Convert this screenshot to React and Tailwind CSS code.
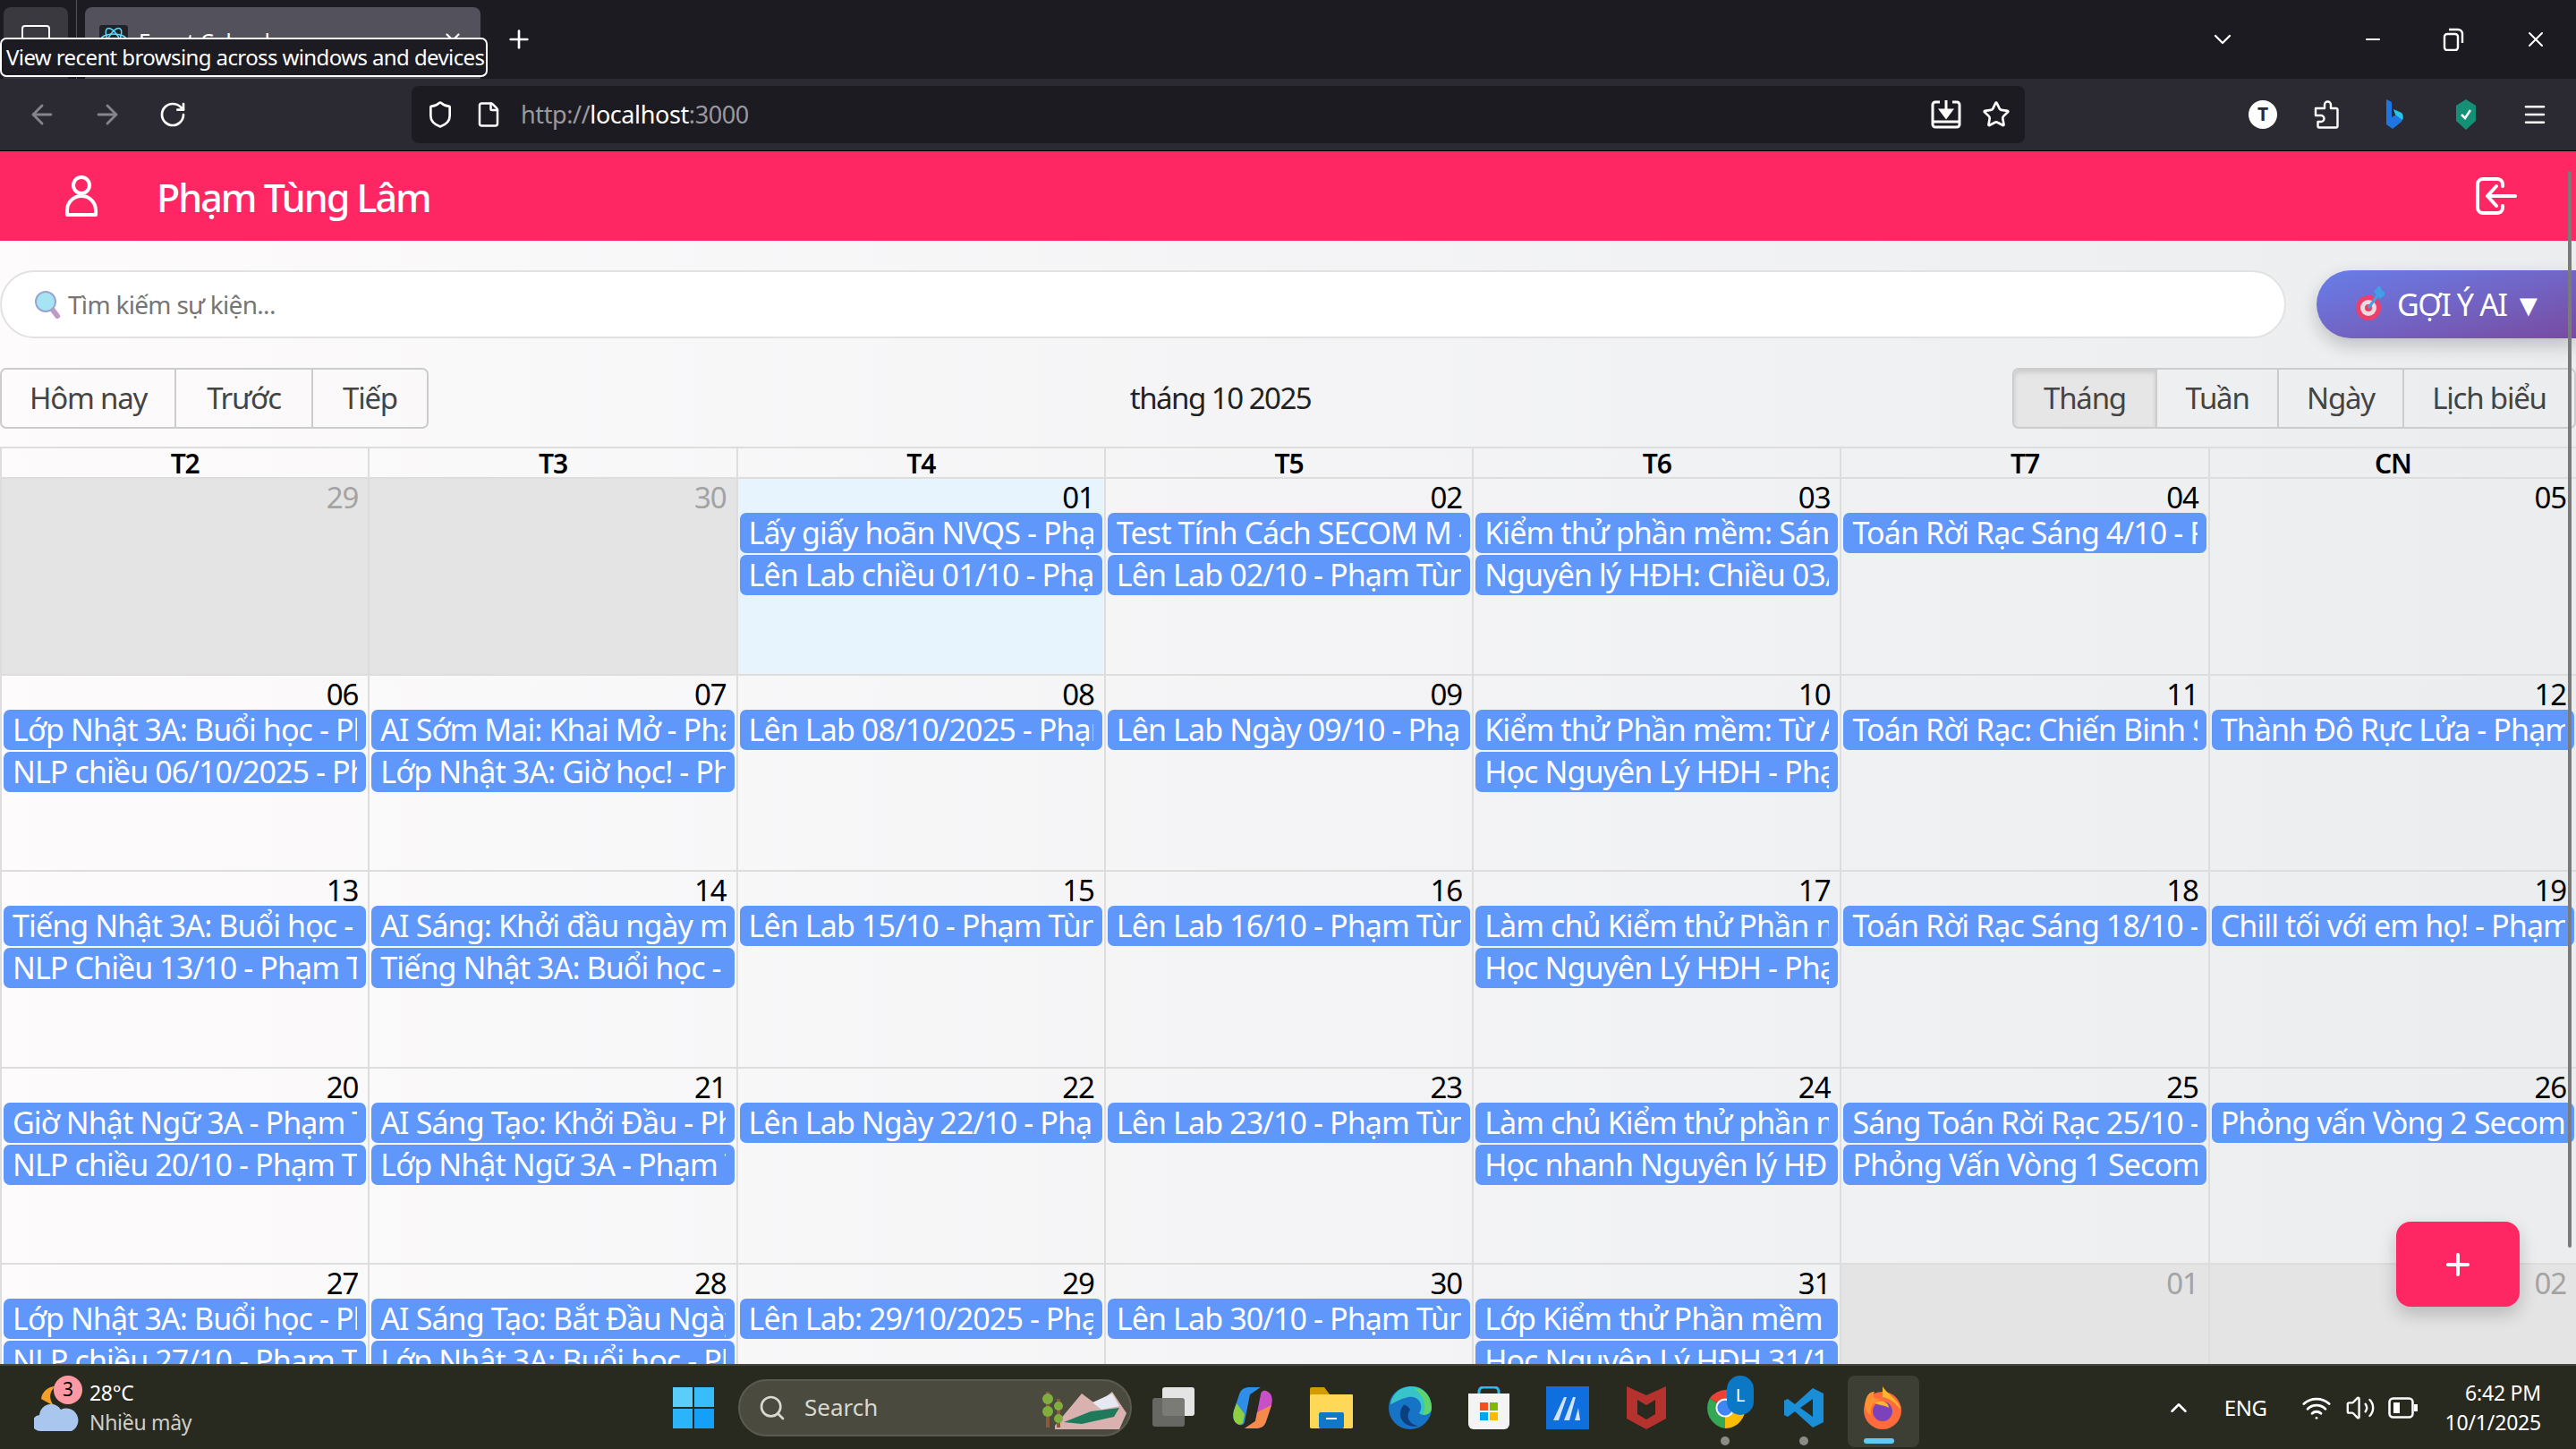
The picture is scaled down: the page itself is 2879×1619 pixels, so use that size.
import { ArrowLeft, ArrowRight, RotateCw, Shield, File, Star, Menu, Minus, X, Plus, ChevronDown, ChevronUp, Search, Wifi, Volume2 } from 'lucide-react';

const weeks = [
    [
        { d: '29', other: true, ev: [] },
        { d: '30', other: true, ev: [] },
        { d: '01', today: true, ev: ['Lấy giấy hoãn NVQS - Phạm Tùng Lâm', 'Lên Lab chiều 01/10 - Phạm Tùng Lâm'] },
        { d: '02', ev: ['Test Tính Cách SECOM M - Phạm Tùng Lâm', 'Lên Lab 02/10 - Phạm Tùng Lâm'] },
        { d: '03', ev: ['Kiểm thử phần mềm: Sáng 03/10', 'Nguyên lý HĐH: Chiều 03/10 - Phạm'] },
        { d: '04', ev: ['Toán Rời Rạc Sáng 4/10 - Phạm Tùng'] },
        { d: '05', ev: [] },
    ],
    [
        { d: '06', ev: ['Lớp Nhật 3A: Buổi học - Phạm Tùng', 'NLP chiều 06/10/2025 - Phạm Tùng'] },
        { d: '07', ev: ['AI Sớm Mai: Khai Mở - Phạm Tùng', 'Lớp Nhật 3A: Giờ học! - Phạm Tùng'] },
        { d: '08', ev: ['Lên Lab 08/10/2025 - Phạm Tùng'] },
        { d: '09', ev: ['Lên Lab Ngày 09/10 - Phạm Tùng'] },
        { d: '10', ev: ['Kiểm thử Phần mềm: Từ A đến Z', 'Học Nguyên Lý HĐH - Phạm Tùng'] },
        { d: '11', ev: ['Toán Rời Rạc: Chiến Binh Sáng'] },
        { d: '12', ev: ['Thành Đô Rực Lửa - Phạm Tùng Lâm'] },
    ],
    [
        { d: '13', ev: ['Tiếng Nhật 3A: Buổi học - Phạm', 'NLP Chiều 13/10 - Phạm Tùng Lâm'] },
        { d: '14', ev: ['AI Sáng: Khởi đầu ngày mới - Phạm', 'Tiếng Nhật 3A: Buổi học - Phạm'] },
        { d: '15', ev: ['Lên Lab 15/10 - Phạm Tùng Lâm'] },
        { d: '16', ev: ['Lên Lab 16/10 - Phạm Tùng Lâm'] },
        { d: '17', ev: ['Làm chủ Kiểm thử Phần mềm - Phạm', 'Học Nguyên Lý HĐH - Phạm Tùng'] },
        { d: '18', ev: ['Toán Rời Rạc Sáng 18/10 - Phạm'] },
        { d: '19', ev: ['Chill tối với em họ! - Phạm Tùng'] },
    ],
    [
        { d: '20', ev: ['Giờ Nhật Ngữ 3A - Phạm Tùng Lâm', 'NLP chiều 20/10 - Phạm Tùng Lâm'] },
        { d: '21', ev: ['AI Sáng Tạo: Khởi Đầu - Phạm Tùng', 'Lớp Nhật Ngữ 3A - Phạm Tùng Lâm'] },
        { d: '22', ev: ['Lên Lab Ngày 22/10 - Phạm Tùng'] },
        { d: '23', ev: ['Lên Lab 23/10 - Phạm Tùng Lâm'] },
        { d: '24', ev: ['Làm chủ Kiểm thử phần mềm - Phạm', 'Học nhanh Nguyên lý HĐH - Phạm'] },
        { d: '25', ev: ['Sáng Toán Rời Rạc 25/10 - Phạm', 'Phỏng Vấn Vòng 1 Secom'] },
        { d: '26', ev: ['Phỏng vấn Vòng 2 Secom - Phạm'] },
    ],
    [
        { d: '27', ev: ['Lớp Nhật 3A: Buổi học - Phạm Tùng', 'NLP chiều 27/10 - Phạm Tùng Lâm'] },
        { d: '28', ev: ['AI Sáng Tạo: Bắt Đầu Ngày Mới', 'Lớp Nhật 3A: Buổi học - Phạm Tùng'] },
        { d: '29', ev: ['Lên Lab: 29/10/2025 - Phạm Tùng'] },
        { d: '30', ev: ['Lên Lab 30/10 - Phạm Tùng Lâm'] },
        { d: '31', ev: ['Lớp Kiểm thử Phần mềm - Phạm', 'Học Nguyên Lý HĐH 31/10 - Phạm'] },
        { d: '01', other: true, ev: [] },
        { d: '02', other: true, ev: [] },
    ],
];

function DayCell({ day }) {
    const bg = day.other ? 'bg-[#e4e4e4]' : day.today ? 'bg-[#e8f4fd]' : '';
    return (
        <div className={`h-[219.5px] border-l-2 border-b-2 border-[#dddddd] pl-[2px] pr-[2px] overflow-hidden ${bg}`}>
            <div className={`h-[36px] pr-[9px] pt-[2px] text-right text-[33px] leading-[38px] ${day.other ? 'text-[#a3a3a3]' : 'text-black'}`}>
                {day.d}
            </div>
            <div className="flex flex-col gap-[2px] mt-[2px]">
                {day.ev.map((t) => (
                    <div key={t} className="h-[45px] rounded-[7px] bg-[#5f97fa] px-[10px] text-white text-[34px] leading-[45px] tracking-[-0.9px]">
                        <div className="overflow-hidden whitespace-nowrap">{t}</div>
                    </div>
                ))}
            </div>
        </div>
    );
}

function TabGroup({ items, active }) {
    return (
        <div className="flex h-[68px] rounded-[7px] border-2 border-[#cccccc] text-[33px] tracking-[-1.2px] text-[#444444]">
            {items.map((item, i) => (
                <div
                    key={item.name}
                    className={`flex items-center justify-center ${item.w} ${i > 0 ? 'border-l-2 border-[#cccccc]' : ''} ${item.name === active ? 'bg-[#e6e6e6] shadow-[inset_0_3px_5px_rgba(0,0,0,0.125)] rounded-l-[6px]' : ''}`}
                >
                    {item.name}
                </div>
            ))}
        </div>
    );
}

function TaskSlot({ children }) {
    return <div className="w-[88px] h-[52px] flex items-center justify-center relative">{children}</div>;
}

function CalendarPage() {
    return (
        <div className="flex-1 overflow-hidden relative bg-gradient-to-r from-[#fdfbfc] to-[#ebedef] font-['Noto_Sans',sans-serif] tracking-[-1.1px]">
            <header className="h-[100px] bg-[#fe2763] flex items-center justify-between pl-[73px] pr-[66px] text-white">
                <div className="flex items-center">
                    <svg width="36" height="48" viewBox="0 0 36 48" fill="none" stroke="white" strokeWidth="4">
                        <circle cx="18" cy="12" r="9" />
                        <path d="M2 45 v-5 a16 16 0 0 1 32 0 v5 z" strokeLinejoin="round" />
                    </svg>
                    <span className="ml-[66px] text-[43px] font-medium leading-none tracking-[-2px] pt-[2px]">Phạm Tùng Lâm</span>
                </div>
                <svg width="46" height="42" viewBox="0 0 46 42" fill="none" stroke="white" strokeWidth="4" strokeLinecap="round" strokeLinejoin="round">
                    <path d="M30 10 V8 a6 6 0 0 0 -6 -6 H8 a6 6 0 0 0 -6 6 V34 a6 6 0 0 0 6 6 H24 a6 6 0 0 0 6 -6 V32" />
                    <path d="M44 21 H14 M23 10 L13 21 L23 32" />
                </svg>
            </header>

            <div className="flex items-center gap-[34px] h-[76px] mt-[33px]">
                <div className="flex-1 h-full rounded-full bg-white border-2 border-[#e2e2e2] flex items-center pl-[36px]">
                    <svg width="30" height="32" viewBox="0 0 30 32">
                        <path d="M20 21 L26 29" stroke="#c09cc4" strokeWidth="6" strokeLinecap="round" />
                        <circle cx="13" cy="13" r="11" fill="#a6e4f4" stroke="#9aa5cf" strokeWidth="2" />
                    </svg>
                    <span className="ml-[8px] text-[28px] text-[#757575] tracking-[-0.7px]">Tìm kiếm sự kiện...</span>
                </div>
                <div className="w-[290px] h-full rounded-l-full rounded-r-[38px] bg-gradient-to-br from-[#667eea] to-[#764ba2] shadow-[0_8px_20px_rgba(0,0,0,0.2)] flex items-center pl-[44px] text-white text-[34px] tracking-[-1.4px] whitespace-nowrap">
                    <svg width="32" height="40" viewBox="0 0 32 40" className="mr-[14px]">
                        <circle cx="14" cy="24" r="14" fill="#ee3f6b" />
                        <circle cx="14" cy="24" r="9" fill="#e9dde0" />
                        <circle cx="14" cy="24" r="4" fill="#ee3f6b" />
                        <path d="M14 24 L26 8 M22 6 L26 1 L28 6 L32 8 L27 12 Z" stroke="#3fa0e6" strokeWidth="3" fill="#3fa0e6" />
                    </svg>
                    GỢI Ý AI ▼
                </div>
            </div>

            <div className="flex items-center justify-between mt-[33px]">
                <TabGroup items={[{ name: 'Hôm nay', w: 'w-[193px]' }, { name: 'Trước', w: 'w-[153px]' }, { name: 'Tiếp', w: 'w-[129px]' }]} />
                <div className="text-[33px] tracking-[-1.5px] text-[#222222]">tháng 10 2025</div>
                <TabGroup
                    active="Tháng"
                    items={[{ name: 'Tháng', w: 'w-[158px]' }, { name: 'Tuần', w: 'w-[136px]' }, { name: 'Ngày', w: 'w-[140px]' }, { name: 'Lịch biểu', w: 'w-[192px]' }]}
                />
            </div>

            <div className="mt-[20px] border-t-2 border-[#dddddd] grid grid-cols-7">
                {['T2', 'T3', 'T4', 'T5', 'T6', 'T7', 'CN'].map((d) => (
                    <div key={d} className="h-[34px] border-l-2 border-b-2 border-[#dddddd] text-center text-[30px] leading-[34px] font-semibold text-black">
                        {d}
                    </div>
                ))}
                {weeks.flat().map((day, i) => (
                    <DayCell key={i} day={day} />
                ))}
            </div>

            <div className="absolute left-[2870px] top-[22px] w-[4px] h-[1203px] rounded-full bg-[#7a7a7a]" />
            <div className="absolute left-[2678px] top-[1196px] w-[138px] h-[95px] rounded-[16px] bg-[#fe2763] shadow-[0_8px_20px_rgba(0,0,0,0.2)] flex items-center justify-center text-white">
                <Plus size={38} strokeWidth={2.5} />
            </div>
        </div>
    );
}

function Taskbar() {
    return (
        <div className="h-[95px] shrink-0 border-t-2 border-[#47473f] bg-[#292a1f] flex items-center text-white font-['Noto_Sans',sans-serif] relative">
            <div className="w-[752px] pl-[38px] flex items-center shrink-0">
                <div className="relative w-[50px] h-[60px]">
                    <svg width="50" height="60" viewBox="0 0 50 60">
                        <path d="M8 20 A16 16 0 0 1 24 6 A14 14 0 0 0 26 30 Z" fill="#f2a02a" />
                        <path d="M8 56 a9 9 0 0 1 -2 -18 a13 13 0 0 1 24 -6 a11 11 0 0 1 12 24 Z" fill="#a9c6ef" />
                    </svg>
                    <div className="absolute left-[22px] -top-[6px] w-[32px] h-[32px] rounded-full bg-[#ff9aa5] text-black text-[21px] flex items-center justify-center">3</div>
                </div>
                <div className="ml-[12px] text-[23px] leading-[33px] tracking-[-0.3px]">
                    <div>28°C</div>
                    <div className="text-[#cfcfc8]">Nhiều mây</div>
                </div>
            </div>
            <svg width="46" height="46" viewBox="0 0 46 46" className="shrink-0">
                <rect x="0" y="0" width="22" height="22" fill="#5bcdfb" />
                <rect x="24" y="0" width="22" height="22" fill="#38bdfa" />
                <rect x="0" y="24" width="22" height="22" fill="#2cb4fb" />
                <rect x="24" y="24" width="22" height="22" fill="#14a0f8" />
            </svg>
            <div className="ml-[27px] w-[440px] h-[64px] rounded-full bg-[#4a4b3e] border-2 border-[#5a5b4e] flex items-center pl-[20px] text-[#d8d8d0] text-[26px] shrink-0 relative overflow-hidden">
                <Search size={32} />
                <span className="ml-[20px]">Search</span>
                <svg width="100" height="48" viewBox="0 0 100 48" className="absolute right-[4px] top-[6px]">
                    <path d="M20 44 L50 8 L66 20 L84 6 L100 30 L92 48 H20 Z" fill="#d9b2b0" />
                    <path d="M30 40 L60 28 L92 24 L86 34 L50 42 Z" fill="#1f7a5c" />
                    <path d="M62 18 L84 8 L92 22 L72 26 Z" fill="#e6e9f2" />
                    <rect x="10" y="6" width="4" height="40" fill="#8a5a3a" />
                    <rect x="22" y="14" width="4" height="32" fill="#8a5a3a" />
                    <circle cx="12" cy="14" r="6" fill="#7fae3f" />
                    <circle cx="12" cy="28" r="6" fill="#7fae3f" />
                    <circle cx="24" cy="22" r="5" fill="#7fae3f" />
                    <circle cx="24" cy="36" r="5" fill="#7fae3f" />
                </svg>
            </div>
            <div className="ml-[3px] flex shrink-0">
                <TaskSlot>
                    <div className="relative w-[48px] h-[46px]">
                        <div className="absolute left-[11px] top-0 w-[36px] h-[32px] rounded-[3px] bg-[#e4e4e4]" />
                        <div className="absolute left-0 top-[12px] w-[36px] h-[32px] rounded-[3px] bg-[#6e6e6a]/90" />
                    </div>
                </TaskSlot>
                <TaskSlot>
                    <svg width="46" height="46" viewBox="0 0 46 46">
                        <path d="M8 42 C2 40 0 34 2 26 L8 8 C10 2 14 0 20 0 H32 L20 8 L14 38 C14 41 11 43 8 42 Z" fill="#2f8fe8" />
                        <path d="M8 42 C2 40 0 34 2 26 L5 18 L14 30 L12 40 Z" fill="#8fcf3f" />
                        <path d="M38 4 C44 6 46 12 44 20 L38 38 C36 44 32 46 26 46 H14 L26 38 L32 8 C32 5 35 3 38 4 Z" fill="#c94fc6" />
                        <path d="M44 20 L38 38 C36 44 32 46 26 46 H14 L26 38 L28 28 Z" fill="#f58a4a" />
                    </svg>
                </TaskSlot>
                <TaskSlot>
                    <svg width="48" height="46" viewBox="0 0 48 46">
                        <path d="M0 2 a2 2 0 0 1 2 -2 H16 L22 8 H48 V44 a2 2 0 0 1 -2 2 H2 a2 2 0 0 1 -2 -2 Z" fill="#d49a00" />
                        <rect x="0" y="8" width="48" height="38" rx="2" fill="#ffd858" />
                        <rect x="10" y="28" width="28" height="18" rx="2" fill="#0f78c9" />
                        <rect x="18" y="34" width="12" height="2" fill="#ffffff" />
                    </svg>
                </TaskSlot>
                <TaskSlot>
                    <svg width="48" height="48" viewBox="0 0 48 48">
                        <circle cx="24" cy="24" r="24" fill="#1673c5" />
                        <path d="M2 20 C4 6 16 0 26 0 C40 0 48 12 48 24 C48 32 38 34 34 30 C40 22 34 10 22 12 C12 14 4 20 2 20 Z" fill="#38c5c9" />
                        <path d="M28 2 C40 2 48 12 48 24 C48 30 42 32 38 32 C44 22 38 8 28 2 Z" fill="#5fd468" />
                        <path d="M16 22 C8 32 16 48 34 44 C24 44 18 34 24 26 C20 20 17 20 16 22 Z" fill="#0c3f7e" />
                    </svg>
                </TaskSlot>
                <TaskSlot>
                    <svg width="46" height="48" viewBox="0 0 46 48">
                        <path d="M12 10 V5 a5 5 0 0 1 5 -4 H29 a5 5 0 0 1 5 4 V10" fill="none" stroke="#2fb7ea" strokeWidth="3" />
                        <path d="M0 8 H46 V42 a6 6 0 0 1 -6 6 H6 a6 6 0 0 1 -6 -6 Z" fill="#f4f4f4" />
                        <rect x="13" y="18" width="9" height="9" fill="#f25022" />
                        <rect x="24" y="18" width="9" height="9" fill="#7fba00" />
                        <rect x="13" y="29" width="9" height="9" fill="#00a4ef" />
                        <rect x="24" y="29" width="9" height="9" fill="#ffb900" />
                    </svg>
                </TaskSlot>
                <TaskSlot>
                    <svg width="48" height="48" viewBox="0 0 48 48">
                        <rect width="48" height="48" fill="#0f6fde" />
                        <path d="M8 38 L20 12 H23 L14 38 Z M20 38 L30 12 H33 L26 38 Z M32 38 L36 24 L38 38 Z" fill="#cfe4fb" />
                    </svg>
                </TaskSlot>
                <TaskSlot>
                    <svg width="44" height="48" viewBox="0 0 44 48">
                        <path d="M0 0 L22 10 L44 0 V36 L22 48 L0 36 Z" fill="#b5322e" />
                        <path d="M12 15 L22 21 L32 15 V31 L22 37 L12 31 Z" fill="#292a1f" />
                    </svg>
                </TaskSlot>
                <TaskSlot>
                    <svg width="46" height="48" viewBox="0 0 48 48">
                        <path d="M24 24 L6 13 A24 24 0 0 1 45 13 Z" fill="#ea4335" />
                        <path d="M24 24 L45 13 A24 24 0 0 1 24 48 Z" fill="#fbbc05" />
                        <path d="M24 24 L24 48 A24 24 0 0 1 6 13 Z" fill="#34a853" />
                        <circle cx="24" cy="24" r="11" fill="#ffffff" />
                        <circle cx="24" cy="24" r="9" fill="#4285f4" />
                    </svg>
                    <div className="absolute left-[46px] -top-[10px] w-[30px] h-[44px] rounded-full bg-[#0a78c4] text-white text-[20px] flex items-center justify-center">L</div>
                    <div className="absolute left-[39px] top-[58px] w-[10px] h-[10px] rounded-full bg-[#8c8c86]" />
                </TaskSlot>
                <TaskSlot>
                    <svg width="48" height="48" viewBox="0 0 24 24">
                        <path d="M17 1 L23 4 V20 L17 23 L7 14 L3 17 L1 16 V8 L3 7 L7 10 Z M17 7 L10 12 L17 17 Z" fill="#1a8fd8" fillRule="evenodd" />
                    </svg>
                    <div className="absolute left-[39px] top-[58px] w-[10px] h-[10px] rounded-full bg-[#8c8c86]" />
                </TaskSlot>
                <TaskSlot>
                    <div className="absolute left-[5px] -top-[10px] w-[80px] h-[80px] rounded-[8px] bg-[#3e3f34]" />
                    <svg width="46" height="48" viewBox="0 0 46 48" className="relative">
                        <circle cx="23" cy="27" r="21" fill="#ff6b3a" />
                        <path d="M23 0 C28 8 38 14 42 22 C46 32 38 14 23 12 Z" fill="#ffb52e" />
                        <path d="M4 16 C6 8 10 6 14 6 C10 14 16 14 22 14 C14 16 8 22 10 32 C4 30 2 22 4 16 Z" fill="#ff9230" />
                        <circle cx="23" cy="28" r="11" fill="#7b42bc" />
                        <path d="M14 18 C22 14 30 18 30 24 C24 20 18 22 14 18 Z" fill="#ffb52e" />
                    </svg>
                    <div className="absolute left-[23px] top-[60px] w-[34px] h-[6px] rounded-full bg-[#62c8f5]" />
                </TaskSlot>
            </div>

            <div className="ml-auto pr-[39px] flex items-center shrink-0">
                <ChevronUp size={30} strokeWidth={2} />
                <span className="ml-[36px] text-[24px] tracking-[-0.4px]">ENG</span>
                <Wifi size={34} strokeWidth={2} className="ml-[38px]" />
                <Volume2 size={34} strokeWidth={1.7} className="ml-[15px]" />
                <svg width="34" height="24" viewBox="0 0 34 24" fill="none" className="ml-[14px]">
                    <rect x="1.5" y="1.5" width="26" height="21" rx="4" stroke="white" strokeWidth="2.5" />
                    <rect x="6" y="6" width="7" height="12" fill="white" />
                    <rect x="29" y="8" width="4" height="8" fill="white" />
                </svg>
                <div className="ml-[30px] text-[23px] leading-[33px] text-right tracking-[-0.2px]">
                    <div>6:42 PM</div>
                    <div>10/1/2025</div>
                </div>
            </div>
        </div>
    );
}

function BrowserChrome() {
    return (
        <div className="shrink-0 font-['Noto_Sans',sans-serif] text-white relative">
            <div className="h-[88px] bg-[#1c1b22] flex items-center relative">
                <div className="ml-[4px] w-[72px] h-[80px] mt-[8px] rounded-t-[8px] bg-[#3a3940] flex justify-center pt-[20px]">
                    <div className="w-[32px] h-[20px] rounded-[4px] border-2 border-white" />
                </div>
                <div className="ml-[9px] w-[1px] h-[88px] bg-[#55545c]" />
                <div className="ml-[9px] mt-[8px] w-[442px] h-[80px] rounded-t-[8px] bg-[#53525c] flex pl-[16px] pt-[20px] text-[24px] overflow-hidden">
                    <svg width="32" height="32" viewBox="0 0 32 32" fill="none" stroke="#61dafb" strokeWidth="1.5" className="bg-[#20232a] rounded-[3px]">
                        <ellipse cx="16" cy="16" rx="14" ry="6" />
                        <ellipse cx="16" cy="16" rx="14" ry="6" transform="rotate(60 16 16)" />
                        <ellipse cx="16" cy="16" rx="14" ry="6" transform="rotate(120 16 16)" />
                    </svg>
                    <span className="ml-[12px]">Event Calendar</span>
                    <X size={26} className="ml-auto mr-[18px] mt-[4px]" />
                </div>
                <Plus size={32} strokeWidth={2} className="ml-[27px]" />
                <div className="ml-auto flex items-center">
                    <ChevronDown size={32} strokeWidth={1.7} className="mr-[-11px]" />
                    <Minus size={24} className="ml-[151px]" strokeWidth={2} />
                    <svg width="24" height="26" viewBox="0 0 24 26" fill="none" stroke="white" strokeWidth="2.4" className="ml-[66px]">
                        <rect x="2" y="7" width="15" height="18" rx="3" />
                        <path d="M7 2 H17 a5 5 0 0 1 5 5 V17" />
                    </svg>
                    <X size={28} strokeWidth={1.7} className="ml-[66px] mr-[31px]" />
                </div>
            </div>
            <div className="h-[81px] bg-[#2b2a33] border-b-[1px] border-black flex items-center">
                <ArrowLeft size={34} strokeWidth={2} className="ml-[30px] text-[#85848a]" />
                <ArrowRight size={34} strokeWidth={2} className="ml-[39px] text-[#85848a]" />
                <RotateCw size={32} strokeWidth={2} className="ml-[40px]" />
                <div className="ml-[251px] w-[1803px] h-[64px] rounded-[8px] bg-[#1c1b22] flex items-center pl-[16px] pr-[16px]">
                    <Shield size={32} strokeWidth={2} />
                    <File size={30} strokeWidth={2} className="ml-[23px]" />
                    <span className="ml-[21px] text-[27px] text-[#9a999f] tracking-[-0.4px]">
                        http://<span className="text-white">localhost</span>:3000
                    </span>
                    <svg width="34" height="32" viewBox="0 0 34 32" fill="none" stroke="white" strokeWidth="3" className="ml-auto">
                        <path d="M10 2 H5 a3 3 0 0 0 -3 3 V27 a3 3 0 0 0 3 3 H29 a3 3 0 0 0 3 -3 V5 a3 3 0 0 0 -3 -3 H24" />
                        <path d="M2 24 H32" />
                        <path d="M17 0 V12" />
                        <path d="M11 11 H23 L17 19 Z" fill="white" />
                    </svg>
                    <Star size={32} strokeWidth={2} className="ml-[23px]" />
                </div>
                <div className="ml-[250px] w-[32px] h-[32px] rounded-full bg-white text-[#2b2a33] text-[21px] font-bold flex items-center justify-center">T</div>
                <svg width="28" height="32" viewBox="0 0 28 32" fill="none" stroke="white" strokeWidth="2.4" strokeLinejoin="round" className="ml-[41px]">
                    <path d="M12 9 V5 a3.5 3.5 0 0 1 7 0 V9 H25 a1.5 1.5 0 0 1 1.5 1.5 V29 a1.5 1.5 0 0 1 -1.5 1.5 H6 a1.5 1.5 0 0 1 -1.5 -1.5 V24 H8 a3.5 3.5 0 0 0 0 -7 H2 V9 Z" />
                </svg>
                <svg width="20" height="34" viewBox="0 0 20 34" className="ml-[52px]">
                    <path d="M1 0 L7 3 V20 L14 16 L10 13 L18 16 C20 18 20 22 18 25 L8 33 L1 28 Z" fill="#1f76e0" />
                    <path d="M9 11 L18 15 C20 17 20 21 19 23 L11 17 Z" fill="#28c6e8" />
                </svg>
                <svg width="24" height="34" viewBox="0 0 24 34" className="ml-[58px]">
                    <path d="M12 0 L23 7 V24 L12 34 L1 24 V7 Z" fill="#149077" />
                    <path d="M7 17 L11 21 L17 12" fill="none" stroke="white" strokeWidth="2.5" />
                </svg>
                <Menu size={30} strokeWidth={2} className="ml-[50px]" />
            </div>
            <div className="absolute left-0 top-[42px] w-[545px] h-[44px] rounded-[7px] border-2 border-white bg-[#1c1b22] flex items-center pl-[5px] text-[24px] whitespace-nowrap tracking-[-0.6px]">
                View recent browsing across windows and devices
            </div>
        </div>
    );
}

export default function App() {
    return (
        <div className="w-[2879px] h-[1619px] flex flex-col overflow-hidden">
            <BrowserChrome />
            <CalendarPage />
            <Taskbar />
        </div>
    );
}
